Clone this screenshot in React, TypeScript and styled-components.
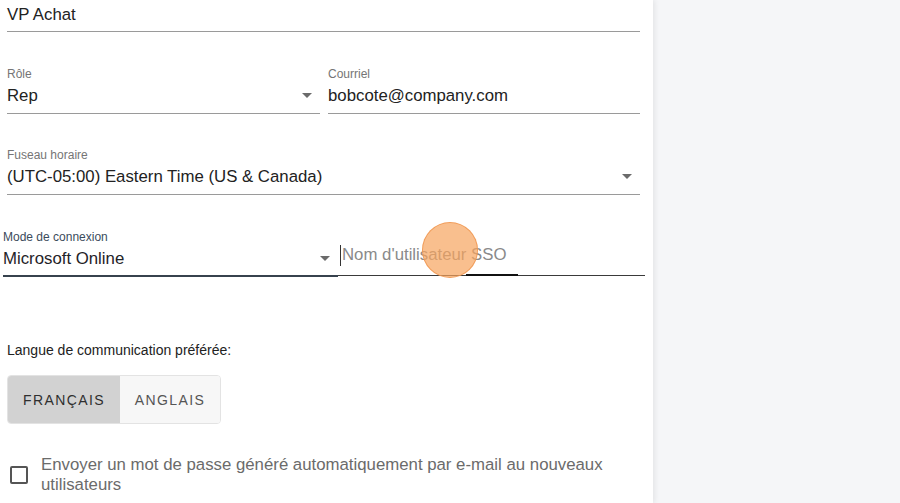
import React from "react";
import styled, { createGlobalStyle } from "styled-components";

const Global = createGlobalStyle`
  html, body { margin: 0; padding: 0; background: #f5f6f8; }
  body { font-family: "Liberation Sans", Arial, sans-serif; }
  #root { height: 503px; overflow: hidden; }
`;

const Page = styled.div`
  display: flex;
  height: 503px;
  width: 900px;
  overflow: hidden;
`;

const Panel = styled.div`
  width: 653px;
  flex: none;
  background: #fff;
  box-shadow: 2px 0 5px rgba(0, 0, 0, 0.07);
  padding: 0 13px 0 7px;
  box-sizing: border-box;
  position: relative;
  z-index: 1;
`;

const Side = styled.div`
  flex: 1;
  background: #f5f6f8;
`;

const Row = styled.div<{ $mt: number; $ml?: number; $mr?: number; $cols?: string; $gap?: number }>`
  display: grid;
  grid-template-columns: ${(p) => p.$cols ?? "1fr"};
  column-gap: ${(p) => p.$gap ?? 0}px;
  margin-top: ${(p) => p.$mt}px;
  margin-left: ${(p) => p.$ml ?? 0}px;
  margin-right: ${(p) => p.$mr ?? 0}px;
`;

const Field = styled.div`
  display: flex;
  flex-direction: column;
  position: relative;
`;

const Label = styled.div<{ $focused?: boolean }>`
  font-size: 12px;
  line-height: 14px;
  height: 14px;
  color: ${(p) => (p.$focused ? "#3b4b5c" : "#757575")};
`;

const Value = styled.div<{ $focused?: boolean; $pt?: number; $pb?: number }>`
  position: relative;
  display: flex;
  align-items: center;
  font-size: 16.8px;
  line-height: 20px;
  height: 20px;
  padding: ${(p) => p.$pt ?? 5}px 0 ${(p) => p.$pb ?? 7}px;
  color: ${(p) => (p.$focused ? "#1f2328" : "#222")};
  border-bottom: ${(p) => (p.$focused ? "2px solid #37424d" : "1px solid #9a9a9a")};
  white-space: nowrap;
`;

const Arrow = styled.span`
  position: absolute;
  right: 8px;
  top: 50%;
  margin-top: -4px;
  width: 0;
  height: 0;
  border-left: 5px solid transparent;
  border-right: 5px solid transparent;
  border-top: 5px solid #6b6b6b;
`;

const SsoInput = styled.div`
  position: relative;
  display: flex;
  align-items: center;
  height: 20px;
  padding: 15px 0 10px 2px;
  font-size: 16.8px;
  line-height: 20px;
  color: #8a8a8a;
  border-bottom: 1px solid #3a3a3a;
  white-space: nowrap;
`;

const Caret = styled.span`
  display: inline-block;
  width: 1px;
  height: 21px;
  background: #333;
  margin-right: 1px;
`;

const Ripple = styled.span`
  position: absolute;
  left: 128px;
  width: 52px;
  bottom: -1px;
  height: 2px;
  background: #111;
`;

const Cursor = styled.div`
  position: absolute;
  left: 422px;
  top: 222px;
  width: 56px;
  height: 56px;
  border-radius: 50%;
  background: rgba(247, 164, 94, 0.7);
  border: 1.5px solid rgba(240, 150, 80, 0.85);
  box-sizing: border-box;
  z-index: 3;
  pointer-events: none;
`;

const SectionLabel = styled.div`
  margin-top: 65px;
  font-size: 14px;
  line-height: 16px;
  color: #222;
`;

const ToggleGroup = styled.div`
  display: inline-flex;
  margin-top: 17px;
  border: 1px solid #e3e3e3;
  border-radius: 4px;
  overflow: hidden;
  height: 47px;
`;

const ToggleButton = styled.button<{ $selected?: boolean; $w: number }>`
  width: ${(p) => p.$w}px;
  border: none;
  margin: 0;
  padding: 0;
  font-family: "Liberation Sans", Arial, sans-serif;
  font-size: 14px;
  letter-spacing: 1.4px;
  text-transform: uppercase;
  color: ${(p) => (p.$selected ? "#2f2f2f" : "#555")};
  background: ${(p) => (p.$selected ? "#d2d2d2" : "#f7f7f7")};
`;

const CheckRow = styled.label`
  display: flex;
  align-items: flex-start;
  margin-top: 31px;
  gap: 13px;
`;

const Box = styled.span`
  flex: none;
  width: 18px;
  height: 18px;
  box-sizing: border-box;
  border: 2px solid #555;
  border-radius: 2px;
  margin: 11px 0 0 3px;
`;

const CheckText = styled.span`
  font-size: 16.8px;
  line-height: 20px;
  color: #6b6b6b;
  width: 585px;
`;

export default function App() {
  return (
    <>
      <Global />
      <Page>
        <Panel>
          <Row $mt={0}>
            <Field>
              <Value $pt={5} $pb={6}>VP Achat</Value>
            </Field>
          </Row>
          <Row $mt={35} $cols="313px 312px" $gap={8}>
            <Field>
              <Label>Rôle</Label>
              <Value>
                Rep
                <Arrow />
              </Value>
            </Field>
            <Field>
              <Label>Courriel</Label>
              <Value>bobcote@company.com</Value>
            </Field>
          </Row>
          <Row $mt={34}>
            <Field>
              <Label>Fuseau horaire</Label>
              <Value>
                (UTC-05:00) Eastern Time (US &amp; Canada)
                <Arrow />
              </Value>
            </Field>
          </Row>
          <Row $mt={35} $ml={-4} $mr={-5} $cols="335px 307px">
            <Field>
              <Label $focused>Mode de connexion</Label>
              <Value $focused $pt={5} $pb={6}>
                Microsoft Online
                <Arrow />
              </Value>
            </Field>
            <Field>
              <SsoInput>
                <Caret />
                Nom d'utilisateur SSO
                <Ripple />
              </SsoInput>
            </Field>
          </Row>
          <SectionLabel>Langue de communication préférée:</SectionLabel>
          <ToggleGroup>
            <ToggleButton $selected $w={112}>Français</ToggleButton>
            <ToggleButton $w={100}>Anglais</ToggleButton>
          </ToggleGroup>
          <CheckRow>
            <Box />
            <CheckText>
              Envoyer un mot de passe généré automatiquement par e-mail au nouveaux utilisateurs
            </CheckText>
          </CheckRow>
          <Cursor />
        </Panel>
        <Side />
      </Page>
    </>
  );
}
